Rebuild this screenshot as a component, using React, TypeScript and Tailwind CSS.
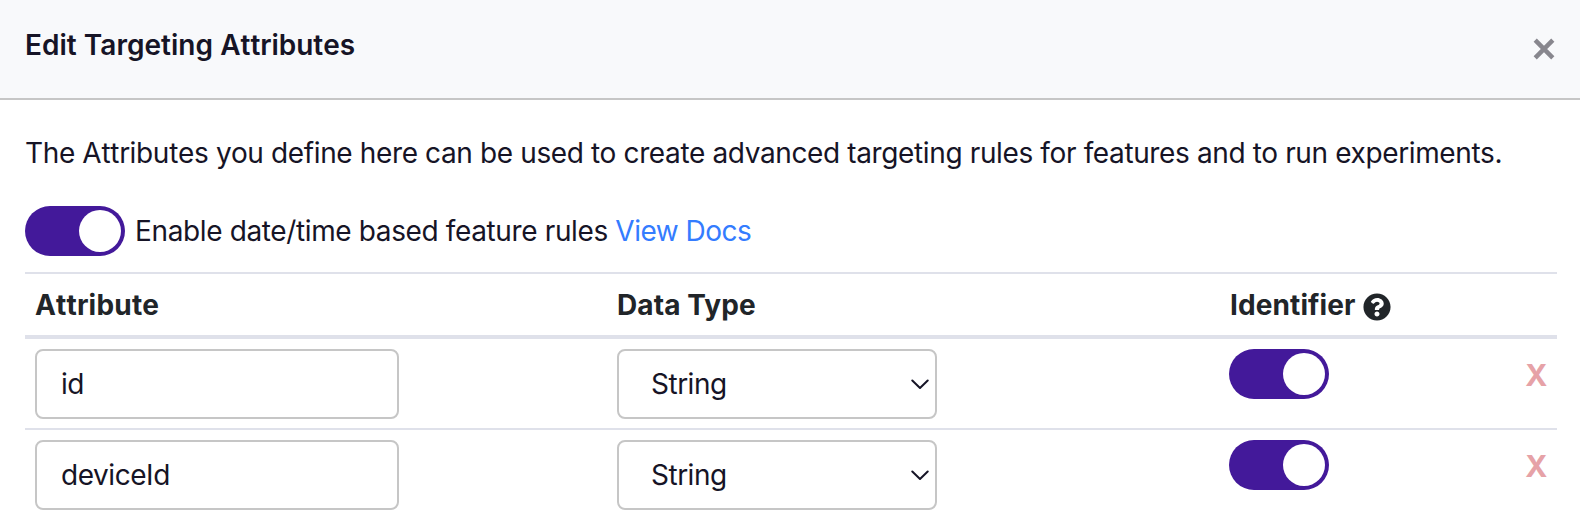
import { FaQuestionCircle } from "react-icons/fa";

function Toggle() {
  return (
    <button
      type="button"
      role="switch"
      aria-checked="true"
      className="flex h-[50px] w-[100px] shrink-0 items-center justify-end rounded-full bg-[#43199a] p-1"
    >
      <span className="size-[42px] rounded-full bg-white" />
    </button>
  );
}

const columns = "grid grid-cols-[582px_612px_1fr_auto] pl-[10px] pr-[9.5px]";

function AttributeRow({ name, type }: { name: string; type: string }) {
  return (
    <div className={`${columns} h-[91px] border-b-2 border-[#dfe1ea] pt-[10px] last:border-b-0`}>
      <div className="flex h-[70px] w-[364px] items-center rounded-lg border-2 border-[#c6c6c6] pl-6 leading-[42px] tracking-[-0.45px]">
        {name}
      </div>
      <div className="flex h-[70px] w-[320px] items-center justify-between rounded-lg border-2 border-[#c6c6c6] pr-[6px] pl-8 leading-[42px]">
        <span className="tracking-[-0.5px]">{type}</span>
        <svg width="18" height="11" viewBox="0 0 18 11" fill="none" stroke="#161426" strokeWidth="2" strokeLinecap="round" strokeLinejoin="round">
          <path d="M1.3 1.5 9 9l7.7-7.5" />
        </svg>
      </div>
      <Toggle />
      <button type="button" className="h-[52px] text-[30px] leading-[52px] font-bold tracking-normal text-[#e6a2a7]">
        X
      </button>
    </div>
  );
}

export default function App() {
  return (
    <div className="h-[520px] overflow-hidden bg-white font-['Inter',sans-serif] text-[28px] tracking-[-0.35px] text-[#161426]">
      <header className="flex h-[100px] justify-between border-b-2 border-[#c6c6c6] bg-[#f8f9fb] px-[25px]">
        <h1 className="mt-6 leading-[42px] font-semibold tracking-[0.03px]">
          Edit Targeting <span className="tracking-[0px] [font-kerning:none]">Attributes</span>
        </h1>
        <button type="button" aria-label="Close" className="mt-[38px] h-[22px]">
          <svg width="22" height="22" viewBox="0 0 22 22" stroke="#88878e" strokeWidth="4.5">
            <path d="M2.2 2.2l17.6 17.6M19.8 2.2 2.2 19.8" />
          </svg>
        </button>
      </header>
      <main className="px-[25px] pt-8">
        <p className="leading-[42px] tracking-[-0.37px] whitespace-nowrap">
          The <span className="tracking-[-0.27px] [font-kerning:none]">Attributes</span> you define here can be used to create advanced targeting rules for features and to run experiments.
        </p>
        <div className="mt-8 flex items-center gap-[10px] leading-[42px]">
          <Toggle />
          <span className="tracking-[-0.37px] whitespace-nowrap">
            Enable date/time based feature rules <a className="tracking-[-0.5px] text-[#347cff]">View Docs</a>
          </span>
        </div>
        <div className="mt-4 w-[1532px] border-t-2 border-[#dfe1ea]">
          <div className={`${columns} h-[65px] border-b-4 border-[#dfe1ea] pt-[10px] leading-[42px] font-bold tracking-[0.1px] text-[#212529]`}>
            <span className="tracking-[0.2px] [font-kerning:none]">Attribute</span>
            <span>Data Type</span>
            <span className="flex items-start gap-[7px] pl-px">
              Identifier
              <FaQuestionCircle className="mt-[9px] size-7" />
            </span>
          </div>
          <AttributeRow name="id" type="String" />
          <AttributeRow name="deviceId" type="String" />
        </div>
      </main>
    </div>
  );
}
